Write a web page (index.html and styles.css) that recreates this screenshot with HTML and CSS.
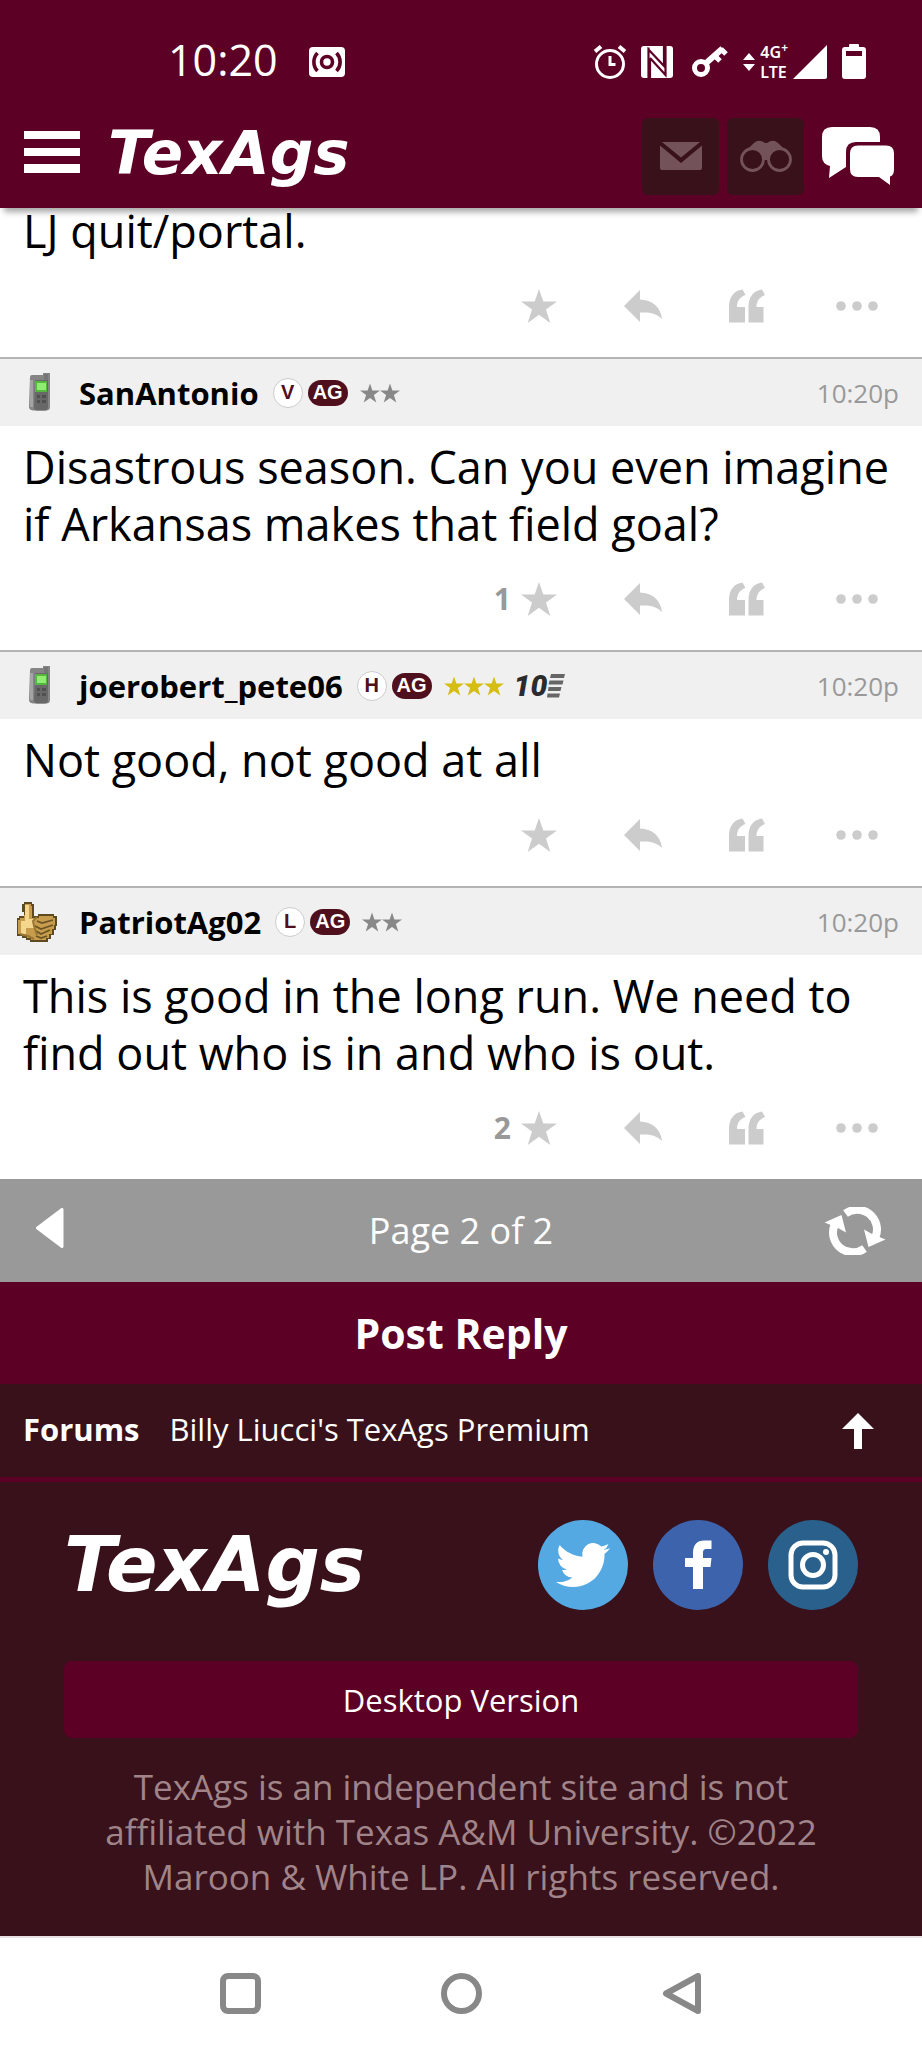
FILE: index.html
```
<!DOCTYPE html>
<html lang="en">
<head>
<meta charset="utf-8">
<meta name="viewport" content="width=device-width, initial-scale=1">
<title>TexAgs</title>
<link rel="stylesheet" href="styles.css">
</head>
<body>
<svg class="sprite" aria-hidden="true">
  <symbol id="star" viewBox="0 0 36 34"><path d="M18 0l4.3 12.6H36L25 20.6 29.3 34 18 25.8 6.7 34 11 20.6 0 12.600h13.700z"/></symbol>
  <symbol id="reply" viewBox="0 0 38 32"><path d="M16 0v9.500c12 .5 20.500 7 22 19.500-5-5.500-12-7-22-6.500V32L0 16z"/></symbol>
  <symbol id="quote" viewBox="0 0 36 34"><path d="M0 33.500V18C0 8 5 1.500 13.500 0.500L16.500 6C11 8 8 12 8 18h8v15.500zM19.500 33.500V18c0-10 5-16.500 13.500-17.500L36 6c-5.500 2-8.500 6-8.500 12h7v15.500z"/></symbol>
  <symbol id="dots" viewBox="0 0 46 10"><circle cx="9" cy="5" r="4.800"/><circle cx="25" cy="5" r="4.800"/><circle cx="41" cy="5" r="4.800"/></symbol>
  <symbol id="phone" viewBox="0 0 22 38">
    <path d="M2 4q0-2 2-2h11V0h7v34q0 3-3 3.500H5Q1 37 1 34z" fill="#858585"/>
    <path d="M7 7h13v27q0 3-3 3.500H9q-3-.5-3-3z" fill="#686868"/>
    <path d="M16 1h4v6h-4z" fill="#767676"/>
    <path d="M7 8h12v11H7z" fill="#55b83e"/><path d="M9 10h9v7H9z" fill="#8eee70"/>
    <path d="M9 22h3v3H9zM14 22h4v3h-4zM9 27h3v3H9zM14 27h4v3h-4z" fill="#505050"/>
    <path d="M2 7h3v27H2z" fill="#a4a4a4"/>
  </symbol>
  <symbol id="thumb" viewBox="0 0 40 40">
    <path d="M7 0h8v2h2v12h4v-2h16v2h3v10h-1v4h-2v5h-3v4h-3v3H13v-2H9v-2H5v-2H0V16h2v-2h5V10H5V2h2z" fill="#5d4a20"/>
    <path d="M8 2h6v2h1v12h7v-2h14v2h2v7h-1v4h-2v5h-3v4h-3v2H14v-2h-4v-2H6v-2H1V18h2v-2h4v-3h1z" fill="#c79c4c"/>
    <path d="M8 3h4v14h5v9H9v6H4V19h4z" fill="#f4d68c"/>
    <path d="M20 19l5 2 11-3M18 24l6 3 12-4M19 29l5 3 9-4M19 34l5 2 6-2" fill="none" stroke="#6b5424" stroke-width="1.800"/>
    <path d="M20 15l-4 4 1 5 3 9M3 32l8 2 6 3" fill="none" stroke="#9a7735" stroke-width="2"/>
  </symbol>
</svg>

<header class="top">
  <div class="status">
    <div class="status-left">
      <span class="clock">10:20</span>
      <svg width="36" height="30" viewBox="0 0 36 30"><rect width="36" height="30" rx="4" fill="#fff"/><circle cx="18" cy="15" r="5.500" fill="none" stroke="#5c0025" stroke-width="3.600"/><path d="M8.500 6a13 13 0 0 0 0 18M27.500 6a13 13 0 0 1 0 18" fill="none" stroke="#5c0025" stroke-width="3.600"/></svg>
    </div>
    <div class="status-right">
      <svg width="32" height="34" viewBox="0 0 32 34" fill="none" stroke="#fff"><circle cx="16" cy="19" r="13.500" stroke-width="3"/><path d="M16 11v8.500h5.500" stroke-width="3"/><path d="M1 6.500l6-5M31 6.500l-6-5" stroke-width="4"/></svg>
      <svg class="nfc" width="32" height="32" viewBox="0 0 32 32"><rect width="32" height="32" rx="3" fill="#fff"/><path d="M7.500 32V3.500L23 20V0M7.500 1.500V8M9 12v20M9 12l15.500 17V0" fill="none" stroke="#5c0025" stroke-width="2.200"/></svg>
      <svg class="key" width="36" height="32" viewBox="0 0 36 32" fill="none" stroke="#fff"><circle cx="9" cy="22" r="6.500" stroke-width="5"/><path d="M13 18L30.500 2.500" stroke-width="6"/><path d="M29 3l5 5M22.500 9.500l5.500 5.500" stroke-width="5"/></svg>
      <svg class="updown" width="12" height="18" viewBox="0 0 12 18" fill="#fff"><path d="M6 0l6 7H0zM0 11h12l-6 7z"/></svg>
      <span class="net">4G<sup>+</sup><br>LTE</span>
      <svg width="34" height="34" viewBox="0 0 34 34"><path d="M34 0v32q0 2-2 2H0z" fill="#fff"/></svg>
      <svg class="battery" width="24" height="36" viewBox="0 0 24 36"><path d="M7 3V1q0-1 1-1h8q1 0 1 1v2h4q3 0 3 3v26q0 3-3 3H3q-3 0-3-3V6q0-3 3-3z" fill="#fff"/><path d="M4 7h16v5H4z" fill="#5c0025"/></svg>
    </div>
  </div>
  <div class="bar">
    <button class="plain menu" aria-label="Menu"><svg width="56" height="42" viewBox="0 0 56 42" fill="#fff"><path d="M0 0h56v8H0zM0 17h56v8H0zM0 33h56v9H0z"/></svg></button>
    <a class="logo" href="#">TexAgs</a>
    <div class="tools">
      <button class="tool" aria-label="Messages"><svg width="42" height="28" viewBox="0 0 42 28" fill="#74525a"><path d="M2 0h38L21 15.500zM0 3.500L21 21 42 3.500V26q0 2-2 2H2q-2 0-2-2z"/></svg></button>
      <button class="tool" aria-label="Watched"><svg width="52" height="32" viewBox="0 0 52 32"><path d="M1.500 15L14 3q5-4.500 11 0h2q6-4.500 11 0l12.500 12-9-5-10 3-3 7h-5l-3-7-10-3z" fill="#74525a"/><circle cx="12.500" cy="19.500" r="11" fill="#38111a" stroke="#74525a" stroke-width="2.800"/><circle cx="39.500" cy="19.500" r="11" fill="#38111a" stroke="#74525a" stroke-width="2.800"/></svg></button>
      <button class="plain" aria-label="Forums"><svg width="72" height="58" viewBox="0 0 72 58" fill="#fff"><path d="M10 0h38q10 0 10 10v5H34q-10 0-10 10v15L7 51l1-12Q0 37 0 29V10Q0 0 10 0z"/><path d="M36 18.500h28q8 0 8 8V42q0 7-4 7.500V58l-11-8H36q-8 0-8-8V26.500q0-8 8-8z"/></svg></button>
    </div>
  </div>
</header>

<main>
  <article class="post post-clipped">
    <p class="text">LJ quit/portal.</p>
    <div class="actions">
      <button class="plain" aria-label="Star"><svg width="36" height="34"><use href="#star"/></svg></button>
      <button class="plain" aria-label="Reply"><svg width="38" height="32"><use href="#reply"/></svg></button>
      <button class="plain" aria-label="Quote"><svg width="36" height="34"><use href="#quote"/></svg></button>
      <button class="plain" aria-label="More"><svg width="46" height="10"><use href="#dots"/></svg></button>
    </div>
  </article>

  <article class="post">
    <header class="head">
      <svg class="avatar" width="40" height="40"><use href="#phone" x="11" y="0" width="22" height="38"/></svg>
      <a class="name" href="#">SanAntonio</a>
      <span class="badge">V</span><span class="ag">AG</span>
      <span class="stars"><svg><use href="#star"/></svg><svg><use href="#star"/></svg></span>
      <time>10:20p</time>
    </header>
    <p class="text">Disastrous season. Can you even imagine if Arkansas makes that field goal?</p>
    <div class="actions">
      <button class="plain" aria-label="Star"><span class="count">1</span><svg width="36" height="34"><use href="#star"/></svg></button>
      <button class="plain" aria-label="Reply"><svg width="38" height="32"><use href="#reply"/></svg></button>
      <button class="plain" aria-label="Quote"><svg width="36" height="34"><use href="#quote"/></svg></button>
      <button class="plain" aria-label="More"><svg width="46" height="10"><use href="#dots"/></svg></button>
    </div>
  </article>

  <article class="post">
    <header class="head">
      <svg class="avatar" width="40" height="40"><use href="#phone" x="11" y="0" width="22" height="38"/></svg>
      <a class="name" href="#">joerobert_pete06</a>
      <span class="badge">H</span><span class="ag">AG</span>
      <span class="stars gold"><svg><use href="#star"/></svg><svg><use href="#star"/></svg><svg><use href="#star"/></svg></span>
      <span class="ten">10<svg width="18" height="24" viewBox="0 0 18 24" fill="#666"><path d="M4 0h14l-1 4H3zM2.500 6.500h14l-1 4h-14zM1.500 13h13l-1 4H1zM.5 19.500H13l-1 4H0z"/></svg></span>
      <time>10:20p</time>
    </header>
    <p class="text">Not good, not good at all</p>
    <div class="actions">
      <button class="plain" aria-label="Star"><svg width="36" height="34"><use href="#star"/></svg></button>
      <button class="plain" aria-label="Reply"><svg width="38" height="32"><use href="#reply"/></svg></button>
      <button class="plain" aria-label="Quote"><svg width="36" height="34"><use href="#quote"/></svg></button>
      <button class="plain" aria-label="More"><svg width="46" height="10"><use href="#dots"/></svg></button>
    </div>
  </article>

  <article class="post">
    <header class="head">
      <svg class="avatar" width="40" height="40"><use href="#thumb"/></svg>
      <a class="name" href="#">PatriotAg02</a>
      <span class="badge">L</span><span class="ag">AG</span>
      <span class="stars"><svg><use href="#star"/></svg><svg><use href="#star"/></svg></span>
      <time>10:20p</time>
    </header>
    <p class="text">This is good in the long run. We need to find out who is in and who is out.</p>
    <div class="actions">
      <button class="plain" aria-label="Star"><span class="count">2</span><svg width="36" height="34"><use href="#star"/></svg></button>
      <button class="plain" aria-label="Reply"><svg width="38" height="32"><use href="#reply"/></svg></button>
      <button class="plain" aria-label="Quote"><svg width="36" height="34"><use href="#quote"/></svg></button>
      <button class="plain" aria-label="More"><svg width="46" height="10"><use href="#dots"/></svg></button>
    </div>
  </article>

  <nav class="pager" aria-label="Pages">
    <button class="plain previous" aria-label="Previous page"><svg width="28" height="40" viewBox="0 0 28 40"><path d="M26 1.500v37L1.500 20z" fill="#fff" stroke="#fff" stroke-width="3" stroke-linejoin="round"/></svg></button>
    <span>Page 2 of 2</span>
    <button class="plain refresh" aria-label="Refresh"><svg width="62" height="48" viewBox="0 0 62 48"><g fill="none" stroke="#fff" stroke-width="8"><path d="M21.500 6.500A19.800 19.800 0 0 1 51.500 30"/><path d="M40.500 41.500A19.800 19.800 0 0 1 10.500 18"/></g><path d="M61.500 32.500L44.500 40 40 22.500l9 5z" fill="#fff"/><path d="M.5 15.500L17.500 8 22 25.500l-9-5z" fill="#fff"/></svg></button>
  </nav>
  <button class="reply-button">Post Reply</button>
</main>

<nav class="crumbs" aria-label="Breadcrumb">
  <a class="forums" href="#">Forums</a>
  <a href="#">Billy Liucci's TexAgs Premium</a>
  <button class="plain" aria-label="Back to top"><svg width="32" height="36" viewBox="0 0 32 36"><path d="M16 0l16 16H20v20h-8V16H0z" fill="#fff"/></svg></button>
</nav>

<footer class="footer">
  <div class="brand">
    <a class="logo logo-large" href="#">TexAgs</a>
    <div class="social">
      <a class="twitter" href="#" aria-label="Twitter"><svg width="54" height="54" viewBox="0 0 24 24" fill="#fff"><path d="M23.953 4.570a10 10 0 01-2.825.775 4.958 4.958 0 002.163-2.723c-.951.555-2.005.959-3.127 1.184a4.920 4.920 0 00-8.384 4.482C7.690 8.095 4.067 6.130 1.640 3.162a4.822 4.822 0 00-.666 2.475c0 1.710.87 3.213 2.188 4.096a4.904 4.904 0 01-2.228-.616v.06a4.923 4.923 0 003.946 4.827 4.996 4.996 0 01-2.212.085 4.936 4.936 0 004.604 3.417 9.867 9.867 0 01-6.102 2.105c-.39 0-.779-.023-1.170-.067a13.995 13.995 0 007.557 2.209c9.053 0 13.998-7.496 13.998-13.985 0-.21 0-.42-.015-.63A9.935 9.935 0 0024 4.590z"/></svg></a>
      <a class="facebook" href="#" aria-label="Facebook"><svg width="90" height="90" viewBox="0 0 90 90" fill="#fff"><path d="M40 69V47h-8v-9h8v-5c0-8 4-12.500 11-12.500h7.500v8.500H54c-3 0-4 1-4 4v5h8.500l-1 9H50v22z"/></svg></a>
      <a class="instagram" href="#" aria-label="Instagram"><svg width="90" height="90" viewBox="0 0 90 90" fill="none" stroke="#fff" stroke-width="5"><rect x="23" y="23" width="44" height="44" rx="12"/><circle cx="45" cy="45" r="10.500"/><circle cx="58" cy="32" r="3" fill="#fff" stroke="none"/></svg></a>
    </div>
  </div>
  <button class="desktop">Desktop Version</button>
  <p class="legal">TexAgs is an independent site and is not affiliated with Texas A&amp;M University. ©2022 Maroon &amp; White LP. All rights reserved.</p>
</footer>

<nav class="system" aria-label="System">
  <button class="plain" aria-label="Recent"><svg width="41" height="41" viewBox="0 0 41 41"><rect x="3" y="3" width="35" height="35" rx="5"/></svg></button>
  <button class="plain" aria-label="Home"><svg width="41" height="41" viewBox="0 0 41 41"><circle cx="20.500" cy="20.500" r="17.500"/></svg></button>
  <button class="plain" aria-label="Back"><svg width="41" height="41" viewBox="0 0 41 41"><path d="M36 3v35L4 20.500z"/></svg></button>
</nav>
</body>
</html>
```

FILE: styles.css
```
* { box-sizing: border-box; }

body {
  margin: 0;
  background: #fff;
  color: #000;
  font-family: "Open Sans", "Noto Sans", sans-serif;
}

a { color: inherit; text-decoration: none; }
svg { display: block; flex: none; }
.sprite { position: absolute; width: 0; height: 0; }

button {
  border: 0;
  color: inherit;
  font-family: inherit;
  cursor: pointer;
}

.plain {
  display: flex;
  align-items: center;
  padding: 0;
  background: none;
}

/* Status bar and site header */
.top {
  position: relative;
  z-index: 1;
  background: #5c0025;
  color: #fff;
  box-shadow: 0 8px 6px -4px rgba(0, 0, 0, 0.35);
}

.status,
.status-left,
.status-right,
.bar,
.tools { display: flex; align-items: center; }

.status {
  justify-content: space-between;
  height: 104px;
  padding: 20px 56px 0 168px;
}
.status-left { gap: 31px; }
.status-right { gap: 15px; }
.clock { font-size: 43px; line-height: 60px; margin-bottom: 4px; }
.key { margin-left: 4px; }
.net {
  margin: 0 -10px;
  font-family: "Noto Sans", sans-serif;
  font-size: 16px;
  font-weight: 600;
  line-height: 20px;
}
.net sup { font-size: 12px; line-height: 0; }

.bar { height: 104px; padding: 0 28px 0 24px; }
.menu { margin-right: 28px; margin-bottom: 8px; }
.logo {
  font-family: "DejaVu Sans", sans-serif;
  font-size: 61px;
  font-style: italic;
  font-weight: 700;
  line-height: 72px;
}
.bar .logo { margin-bottom: 6px; }
.tools { gap: 8px; margin-left: auto; }
.tools .plain { margin-left: 10px; }
.tool {
  display: flex;
  align-items: center;
  justify-content: center;
  width: 77px;
  height: 77px;
  padding: 0;
  border-radius: 6px;
  background: #38111a;
}

/* Posts */
.head {
  display: flex;
  align-items: center;
  height: 69px;
  padding: 0 23px 0 17px;
  border-top: 2px solid #b4b4b4;
  background: #f0f0f0;
}
.avatar { margin-right: 22px; }
.name {
  margin-right: 14px;
  font-size: 31px;
  font-weight: 700;
  line-height: 40px;
}
.badge,
.ag {
  display: flex;
  align-items: center;
  justify-content: center;
  font-family: "Liberation Sans", sans-serif;
  font-size: 20px;
  font-weight: 700;
}
.badge {
  width: 30px;
  height: 30px;
  margin-right: 5px;
  border: 1px solid #ccc;
  border-radius: 50%;
  background: #fff;
  color: #500f1c;
}
.ag {
  width: 40px;
  height: 26px;
  margin-right: 12px;
  border-radius: 13px;
  background: #500f1c;
  color: #fff;
}
.stars { display: flex; fill: #888; }
.stars svg { width: 20px; height: 20px; }
.gold { fill: #d5bd14; }
.ten {
  display: flex;
  align-items: center;
  margin-left: 10px;
  color: #2b2b2b;
  font-family: Roboto, sans-serif;
  font-size: 30px;
  font-style: italic;
  font-weight: 900;
  line-height: 32px;
}
time {
  margin-left: auto;
  color: #999;
  font-size: 26px;
  line-height: 36px;
}
.text {
  margin: 0;
  padding: 12px 23px 0;
  font-size: 45px;
  line-height: 57px;
}
.post-clipped { margin-top: -18px; }
.actions {
  display: flex;
  align-items: center;
  justify-content: flex-end;
  gap: 67px;
  height: 98px;
  padding: 0 44px 4px 0;
  fill: #ccc;
}
.count {
  margin-right: 10px;
  color: #999;
  font-size: 30px;
  font-weight: 700;
  line-height: 36px;
}

/* Pager and reply */
.pager {
  display: grid;
  grid-template-columns: 1fr auto 1fr;
  align-items: center;
  height: 103px;
  padding: 0 36px;
  background: #999;
  color: #fff;
  font-size: 36px;
}
.previous { justify-self: start; margin-bottom: 6px; }
.refresh { justify-self: end; }
.reply-button {
  display: block;
  width: 100%;
  height: 102px;
  background: #5c0025;
  color: #fff;
  font-size: 41px;
  font-weight: 700;
}

/* Breadcrumb */
.crumbs {
  display: flex;
  align-items: center;
  gap: 30px;
  height: 98px;
  padding: 0 48px 0 23px;
  border-bottom: 5px solid #5c0025;
  background: #38111a;
  color: #fff;
  font-size: 31px;
}
.crumbs a { margin-bottom: 4px; }
.forums { font-weight: 700; }
.crumbs .plain { margin-left: auto; }

/* Footer */
.footer {
  padding: 38px 64px 37px;
  background: #38111a;
}
.brand {
  display: flex;
  align-items: center;
  justify-content: space-between;
  margin-bottom: 51px;
  color: #fff;
}
.logo-large { font-size: 76px; line-height: 90px; }
.social { display: flex; gap: 25px; }
.social a {
  display: flex;
  align-items: center;
  justify-content: center;
  width: 90px;
  height: 90px;
  border-radius: 50%;
}
.twitter { background: #55a9e2; }
.facebook { background: #3d63ad; }
.instagram { background: #29618c; }
.desktop {
  display: block;
  width: 100%;
  height: 77px;
  border-radius: 8px;
  background: #5c0025;
  color: #fff;
  font-size: 31px;
}
.legal {
  margin: 0;
  padding: 26px 32px 0;
  color: #a08489;
  font-size: 35px;
  line-height: 45px;
  text-align: center;
}

/* Device navigation */
.system {
  display: flex;
  align-items: center;
  justify-content: center;
  gap: 180px;
  height: 112px;
  border-top: 2px solid #e8e0e2;
  background: #fff;
}
.system svg {
  fill: none;
  stroke: #888;
  stroke-width: 6;
  stroke-linejoin: round;
}
```
